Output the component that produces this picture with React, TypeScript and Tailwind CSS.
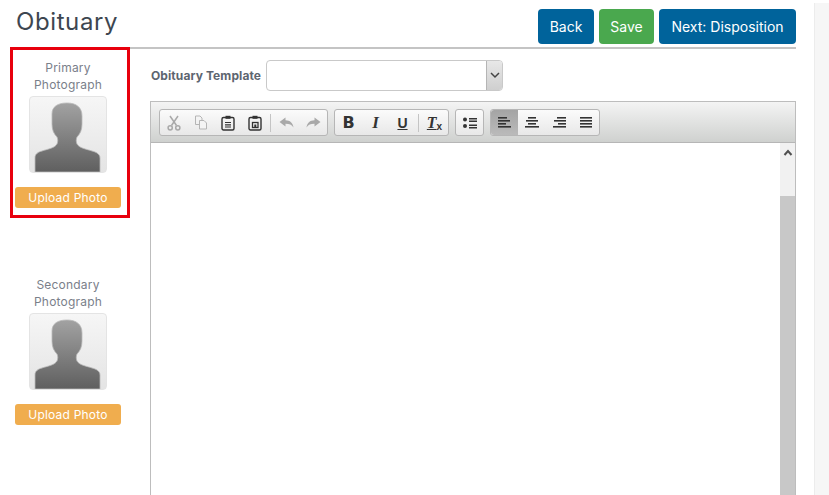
const font = { fontFamily: 'Inter, "Liberation Sans", sans-serif' };

function Silhouette() {
  return (
    <div className="w-[78px] h-[77px] rounded-[4px] border border-[#e4e4e4] bg-gradient-to-b from-[#f6f6f6] to-[#e4e4e4] overflow-hidden">
      <svg width="76" height="75" viewBox="0 0 76 75">
        <defs>
          <linearGradient id="sil" x1="0" y1="0" x2="0" y2="1">
            <stop offset="0" stopColor="#a2a2a2" />
            <stop offset="1" stopColor="#5f5f5f" />
          </linearGradient>
        </defs>
        <path
          d="M5 75V61C5 57 8 55 12 54C18 52 25 51 27 47C28 45 28 42 27 40C24 37 22 33 22 27V17C22 10 27 6 37 6C46 6 52 10 52 19V27C52 33 50 37 47 40C46 42 46 45 47 47C49 51 56 52 62 54C66 55 70 57 70 61V75Z"
          fill="url(#sil)"
          stroke="#b9b9b9"
          strokeWidth="0.8"
        />
      </svg>
    </div>
  );
}

function PhotoBlock({ first }: { first: string }) {
  return (
    <div className="flex flex-col items-center">
      <div className="text-center text-[12px] leading-[17px] tracking-[0.2px] text-[#7a808a]">
        {first}
        <br />
        Photograph
      </div>
      <div className="mt-[3px]">
        <Silhouette />
      </div>
      <button className="mt-[14px] w-[106px] h-[21px] rounded-[3px] bg-[#f0ad4e] text-white text-[12px] leading-[21px] tracking-[0.2px]">
        Upload Photo
      </button>
    </div>
  );
}

function ToolBtn({ children, active }: { children: React.ReactNode; active?: boolean }) {
  return (
    <div
      className={`w-[27px] h-full flex items-center justify-center ${
        active ? 'bg-gradient-to-b from-[#a4a4a4] to-[#bababa] rounded-l-[3px]' : ''
      }`}
    >
      {children}
    </div>
  );
}

function Group({ children }: { children: React.ReactNode }) {
  return (
    <div className="flex items-center h-[27px] rounded-[3px] border border-[#b6b6b6] bg-gradient-to-b from-[#fbfbfb] to-[#e8e8e8]">
      {children}
    </div>
  );
}

function Sep() {
  return <div className="w-px h-[18px] mx-[2px] bg-[#c4c4c4]" />;
}

function Lines({ rows }: { rows: [number, number][] }) {
  return (
    <svg width="14" height="14" viewBox="0 0 14 14">
      {rows.map(([x, w], i) => (
        <rect key={i} x={x} y={1 + i * 3} width={w} height="1.6" fill="#333" />
      ))}
    </svg>
  );
}

function Clip({ children }: { children: React.ReactNode }) {
  return (
    <svg width="14" height="16" viewBox="0 0 14 16" fill="none" stroke="#333" strokeWidth="1.4">
      <rect x="1" y="2.5" width="12" height="12.5" rx="1.5" />
      <rect x="4.5" y="0.8" width="5" height="3" fill="#333" stroke="none" />
      {children}
    </svg>
  );
}

function Toolbar() {
  return (
    <div className="h-[41px] flex items-center gap-[6px] px-2 pt-px border-b border-[#b6b6b6] bg-gradient-to-b from-[#f4f4f4] to-[#cfd1cf]">
      <Group>
        <ToolBtn>
          <svg width="14" height="16" viewBox="0 0 14 16" fill="none" stroke="#a9a9a9" strokeWidth="1.5">
            <path d="M3 1L9.5 10.5M11 1L4.5 10.5" />
            <circle cx="3.2" cy="12.8" r="2.1" />
            <circle cx="10.8" cy="12.8" r="2.1" />
          </svg>
        </ToolBtn>
        <ToolBtn>
          <svg width="14" height="15" viewBox="0 0 14 15" fill="none" stroke="#b5b5b5" strokeWidth="1">
            <path d="M1.5 1H6L8 3V9.5H1.5Z" />
            <path d="M5.5 5.5H10L12.5 8V14H5.5Z" fill="#f4f4f4" />
          </svg>
        </ToolBtn>
        <ToolBtn>
          <Clip>
            <path d="M4 7.5H10M4 9.8H10M4 12H10" strokeWidth="1.2" />
          </Clip>
        </ToolBtn>
        <ToolBtn>
          <Clip>
            <rect x="4.5" y="7.5" width="5.5" height="5" strokeWidth="1.3" />
            <rect x="6.3" y="9.5" width="2" height="3" fill="#333" stroke="none" />
          </Clip>
        </ToolBtn>
        <Sep />
        <ToolBtn>
          <svg width="15" height="11" viewBox="0 0 15 11">
            <path d="M0.5 5L6.5 0.5V3.2C11 3.2 14 6 14.5 10.5C12.8 7.8 10.5 6.8 6.5 6.8V9.5Z" fill="#a9a9a9" />
          </svg>
        </ToolBtn>
        <ToolBtn>
          <svg width="15" height="11" viewBox="0 0 15 11">
            <path d="M14.5 5L8.5 0.5V3.2C4 3.2 1 6 0.5 10.5C2.2 7.8 4.5 6.8 8.5 6.8V9.5Z" fill="#a9a9a9" />
          </svg>
        </ToolBtn>
      </Group>
      <Group>
        <ToolBtn>
          <span className="text-[16px] leading-none font-bold text-[#333]" style={{ fontFamily: '"DejaVu Sans", sans-serif' }}>B</span>
        </ToolBtn>
        <ToolBtn>
          <span className="text-[17px] leading-none font-bold italic text-[#333]" style={{ fontFamily: '"Liberation Serif", serif' }}>I</span>
        </ToolBtn>
        <ToolBtn>
          <span className="text-[14px] leading-none font-bold underline text-[#333]" style={{ fontFamily: '"Liberation Sans", sans-serif' }}>U</span>
        </ToolBtn>
        <Sep />
        <ToolBtn>
          <span className="text-[16px] leading-none font-bold italic underline text-[#333]" style={{ fontFamily: '"Liberation Serif", serif' }}>T</span>
          <span className="text-[10px] leading-none font-bold text-[#333] mt-[8px]" style={{ fontFamily: '"Liberation Sans", sans-serif' }}>x</span>
        </ToolBtn>
      </Group>
      <Group>
        <ToolBtn>
          <svg width="14" height="12" viewBox="0 0 14 12" fill="#333">
            <circle cx="2" cy="2.5" r="2" />
            <circle cx="2" cy="9" r="2" />
            <rect x="6" y="1" width="8" height="1.5" />
            <rect x="6" y="3.5" width="8" height="1.5" />
            <rect x="6" y="7.5" width="8" height="1.5" />
            <rect x="6" y="10" width="8" height="1.5" />
          </svg>
        </ToolBtn>
      </Group>
      <Group>
        <ToolBtn active>
          <Lines rows={[[0, 9], [0, 12], [0, 8], [0, 13]]} />
        </ToolBtn>
        <ToolBtn>
          <Lines rows={[[3, 8], [1, 12], [3, 8], [0, 14]]} />
        </ToolBtn>
        <ToolBtn>
          <Lines rows={[[5, 9], [2, 12], [6, 8], [1, 13]]} />
        </ToolBtn>
        <ToolBtn>
          <Lines rows={[[1, 12], [1, 12], [1, 12], [1, 12]]} />
        </ToolBtn>
      </Group>
    </div>
  );
}

export default function App() {
  return (
    <div className="w-[829px] h-[495px] overflow-hidden bg-white flex" style={font}>
      <div className="w-[814px] shrink-0 flex flex-col">
        <header className="h-[49px] ml-[16px] mr-[18px] flex justify-between border-b-2 border-[#c4c4c4]">
          <h1 className="text-[24px] leading-[28px] mt-[8px] tracking-[0.6px] text-[#3d4650]">Obituary</h1>
          <div className="flex gap-[5px] mt-[9px] h-[35px] text-[14px] text-white">
            <button className="w-[56px] rounded-[4px] bg-[#00639b]">Back</button>
            <button className="w-[55px] rounded-[4px] bg-[#4aa84e]">Save</button>
            <button className="w-[137px] rounded-[4px] bg-[#00639b]">Next: Disposition</button>
          </div>
        </header>
        <div className="flex flex-1 min-h-0">
          <aside className="w-[150px] shrink-0 pl-[10px]">
            <div className="-mt-[2px] w-[120px] h-[171px] border-[3px] border-[#e8000d] pt-[9px] pr-[4px]">
              <PhotoBlock first="Primary" />
            </div>
            <div className="mt-[58px] w-[116px]">
              <PhotoBlock first="Secondary" />
            </div>
          </aside>
          <main className="flex-1 min-w-0 mr-[18px]">
            <div className="flex items-center h-[31px] mt-[11px]">
              <label className="w-[116px] pl-px text-[12px] font-bold tracking-[0.1px] text-[#5d6570]">Obituary Template</label>
              <div className="w-[237px] h-[31px] flex justify-end rounded-[4px] border border-[#c9c9c9] bg-white overflow-hidden">
                <div className="w-[16px] flex items-center justify-center bg-gradient-to-b from-[#e8e8e8] to-[#cfcfcf] border-l border-[#b5b5b5]">
                  <svg width="10" height="7" viewBox="0 0 10 7" fill="none" stroke="#444" strokeWidth="1.5">
                    <path d="M1 1L5 5L9 1" />
                  </svg>
                </div>
              </div>
            </div>
            <div className="mt-[10px] h-[400px] border border-[#bdbdbd]">
              <Toolbar />
              <div className="flex justify-end h-full">
                <div className="w-[15px] h-full bg-[#f1f1f1] flex flex-col">
                  <div className="h-[53px] flex justify-center pt-[6px]">
                    <svg width="10" height="7" viewBox="0 0 10 7" fill="none" stroke="#505050" strokeWidth="2">
                      <path d="M1.5 6L5 2L8.5 6" />
                    </svg>
                  </div>
                  <div className="flex-1 bg-[#c8c8c8]" />
                </div>
              </div>
            </div>
          </main>
        </div>
      </div>
      <div className="flex-1 mt-[3px] border-l border-[#ececec] bg-[#f6f6f6]" />
    </div>
  );
}
